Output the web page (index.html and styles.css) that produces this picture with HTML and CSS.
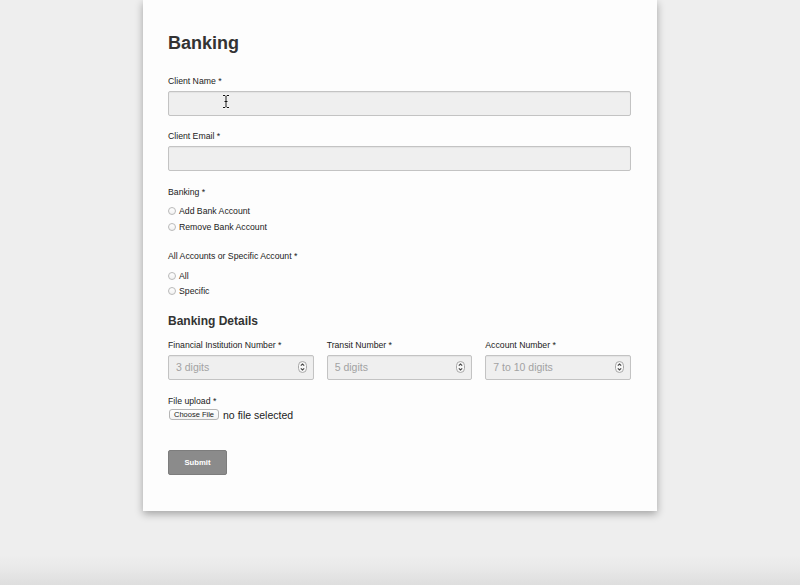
FILE: index.html
```html
<!DOCTYPE html>
<html lang="en">
<head>
<meta charset="utf-8">
<title>Banking</title>
<link rel="stylesheet" href="styles.css">
</head>
<body>
<main class="card">
  <h1 class="title">Banking</h1>

  <div class="field">
    <label class="label">Client Name *</label>
    <div class="box has-cursor">
      <input class="input" type="text">
      <svg class="cursor" width="8" height="15" viewBox="0 0 8 15"><path d="M1 1.5h2l1 1 1-1h2M4 2.5v10M1 13.5h2l1-1 1 1h2M2.5 7.5h3" fill="none" stroke="#fff" stroke-width="2.2"/><path d="M1 1.5h2l1 1 1-1h2M4 2.5v10M1 13.5h2l1-1 1 1h2M2.5 7.5h3" fill="none" stroke="#111" stroke-width="1"/></svg>
    </div>
  </div>

  <div class="field">
    <label class="label">Client Email *</label>
    <div class="box">
      <input class="input" type="text">
    </div>
  </div>

  <fieldset class="group">
    <legend class="label legend">Banking *</legend>
    <label class="radio-row"><input class="radio" type="radio" name="banking"><span>Add Bank Account</span></label>
    <label class="radio-row"><input class="radio" type="radio" name="banking"><span>Remove Bank Account</span></label>
  </fieldset>

  <fieldset class="group group-2">
    <legend class="label legend legend-2">All Accounts or Specific Account *</legend>
    <label class="radio-row"><input class="radio" type="radio" name="scope"><span>All</span></label>
    <label class="radio-row"><input class="radio" type="radio" name="scope"><span>Specific</span></label>
  </fieldset>

  <h2 class="subtitle">Banking Details</h2>

  <div class="columns">
    <div class="col">
      <label class="label label-num">Financial Institution Number *</label>
      <div class="box num">
        <input class="input" type="text" placeholder="3 digits">
        <svg class="spin" width="9" height="12" viewBox="0 0 9 12"><rect x="0.5" y="0.5" width="8" height="11" rx="4" fill="#f7f7f7" stroke="#a8a8a8"/><path d="M2.8 4.6 4.5 3 6.2 4.6M2.8 7.4 4.5 9 6.2 7.4" fill="none" stroke="#444" stroke-width="1.1"/></svg>
      </div>
    </div>
    <div class="col">
      <label class="label label-num">Transit Number *</label>
      <div class="box num">
        <input class="input" type="text" placeholder="5 digits">
        <svg class="spin" width="9" height="12" viewBox="0 0 9 12"><rect x="0.5" y="0.5" width="8" height="11" rx="4" fill="#f7f7f7" stroke="#a8a8a8"/><path d="M2.8 4.6 4.5 3 6.2 4.6M2.8 7.4 4.5 9 6.2 7.4" fill="none" stroke="#444" stroke-width="1.1"/></svg>
      </div>
    </div>
    <div class="col">
      <label class="label label-num">Account Number *</label>
      <div class="box num">
        <input class="input" type="text" placeholder="7 to 10 digits">
        <svg class="spin" width="9" height="12" viewBox="0 0 9 12"><rect x="0.5" y="0.5" width="8" height="11" rx="4" fill="#f7f7f7" stroke="#a8a8a8"/><path d="M2.8 4.6 4.5 3 6.2 4.6M2.8 7.4 4.5 9 6.2 7.4" fill="none" stroke="#444" stroke-width="1.1"/></svg>
      </div>
    </div>
  </div>

  <div class="upload">
    <label class="label">File upload *</label>
    <div class="file-row">
      <button class="choose" type="button">Choose File</button>
      <span class="nofile">no file selected</span>
    </div>
  </div>

  <button class="submit" type="button">Submit</button>
</main>
</body>
</html>
```

FILE: styles.css
```css
html {
  background: linear-gradient(to bottom, #eeeeee 0, #eeeeee 555px, #e9e9e9 568px, #dedede 585px);
  min-height: 100%;
}
body {
  margin: 0;
  font-family: "Liberation Sans", Arial, sans-serif;
  color: #222;
  height: 585px;
  overflow: hidden;
}
.card {
  width: 514px;
  box-sizing: border-box;
  margin: 0 auto;
  padding: 32px 26px 36.5px 25px;
  background: #fdfdfd;
  box-shadow: 0 3px 8px rgba(0, 0, 0, 0.32);
}
.title {
  margin: 0 0 22px;
  font-size: 18px;
  line-height: 22px;
  font-weight: bold;
  color: #333;
}
.label {
  display: block;
  font-size: 8.7px;
  line-height: 11px;
  color: #222;
  margin: 0 0 4px;
  padding: 0;
}
.field + .field {
  margin-top: 15px;
}
.box {
  display: flex;
  align-items: center;
  height: 25px;
  box-sizing: border-box;
  background: #efefef;
  border: 1px solid #c3c3c3;
  border-radius: 2px;
  box-shadow: inset 0 1px 1px rgba(0, 0, 0, 0.05);
}
.has-cursor {
  position: relative;
}
.cursor {
  position: absolute;
  left: 53px;
  top: 2px;
}
.input {
  flex: 1;
  width: 100%;
  min-width: 0;
  border: 0;
  background: transparent;
  outline: none;
  font-family: "Liberation Sans", Arial, sans-serif;
  font-size: 10.5px;
  padding: 0 0 0 7px;
  height: 100%;
  color: #222;
}
.input::placeholder {
  color: #a2a2a2;
}
.spin {
  margin-right: 6px;
  flex: none;
}
.group {
  border: 0;
  margin: 16px 0 0;
  padding: 0;
  min-width: 0;
}
.legend {
  float: left;
  width: 100%;
  margin-bottom: 5.5px;
}
.legend-2 {
  margin-bottom: 6.5px;
}
.radio-row {
  clear: both;
  display: flex;
  align-items: center;
  height: 15.5px;
  font-size: 8.7px;
  color: #222;
}
.radio {
  appearance: none;
  -webkit-appearance: none;
  width: 8px;
  height: 8px;
  margin: 0 3px 0 0;
  border: 1px solid #b9b9b9;
  border-radius: 50%;
  background: linear-gradient(#ffffff, #f1f1f1);
  flex: none;
}
.subtitle {
  margin: 15px 0 11px;
  font-size: 12px;
  line-height: 15px;
  font-weight: bold;
  color: #333;
}
.columns {
  display: grid;
  grid-template-columns: repeat(3, minmax(0, 1fr));
  column-gap: 13px;
}
.col {
  min-width: 0;
}
.label-num {
  margin-bottom: 3.5px;
}
.num {
  height: 25.5px;
}
.upload {
  margin-top: 15.5px;
}
.upload .label {
  margin-bottom: 2px;
}
.file-row {
  display: flex;
  align-items: center;
  height: 12px;
}
.choose {
  height: 11.5px;
  box-sizing: border-box;
  margin: 0 0 0 1px;
  padding: 0 4px;
  border: 1px solid #b5b5b5;
  border-radius: 3px;
  background: linear-gradient(#ffffff, #f3f3f3);
  font-family: "Liberation Sans", Arial, sans-serif;
  font-size: 7.5px;
  line-height: 9px;
  color: #222;
}
.nofile {
  margin-left: 4px;
  font-size: 10.5px;
  color: #222;
}
.submit {
  display: block;
  margin-top: 29px;
  width: 59px;
  height: 25px;
  border: 1px solid #7d7d7d;
  border-radius: 2px;
  background: #8b8b8b;
  color: #fff;
  font-family: "Liberation Sans", Arial, sans-serif;
  font-size: 7.7px;
  font-weight: bold;
  padding: 0;
}
```
